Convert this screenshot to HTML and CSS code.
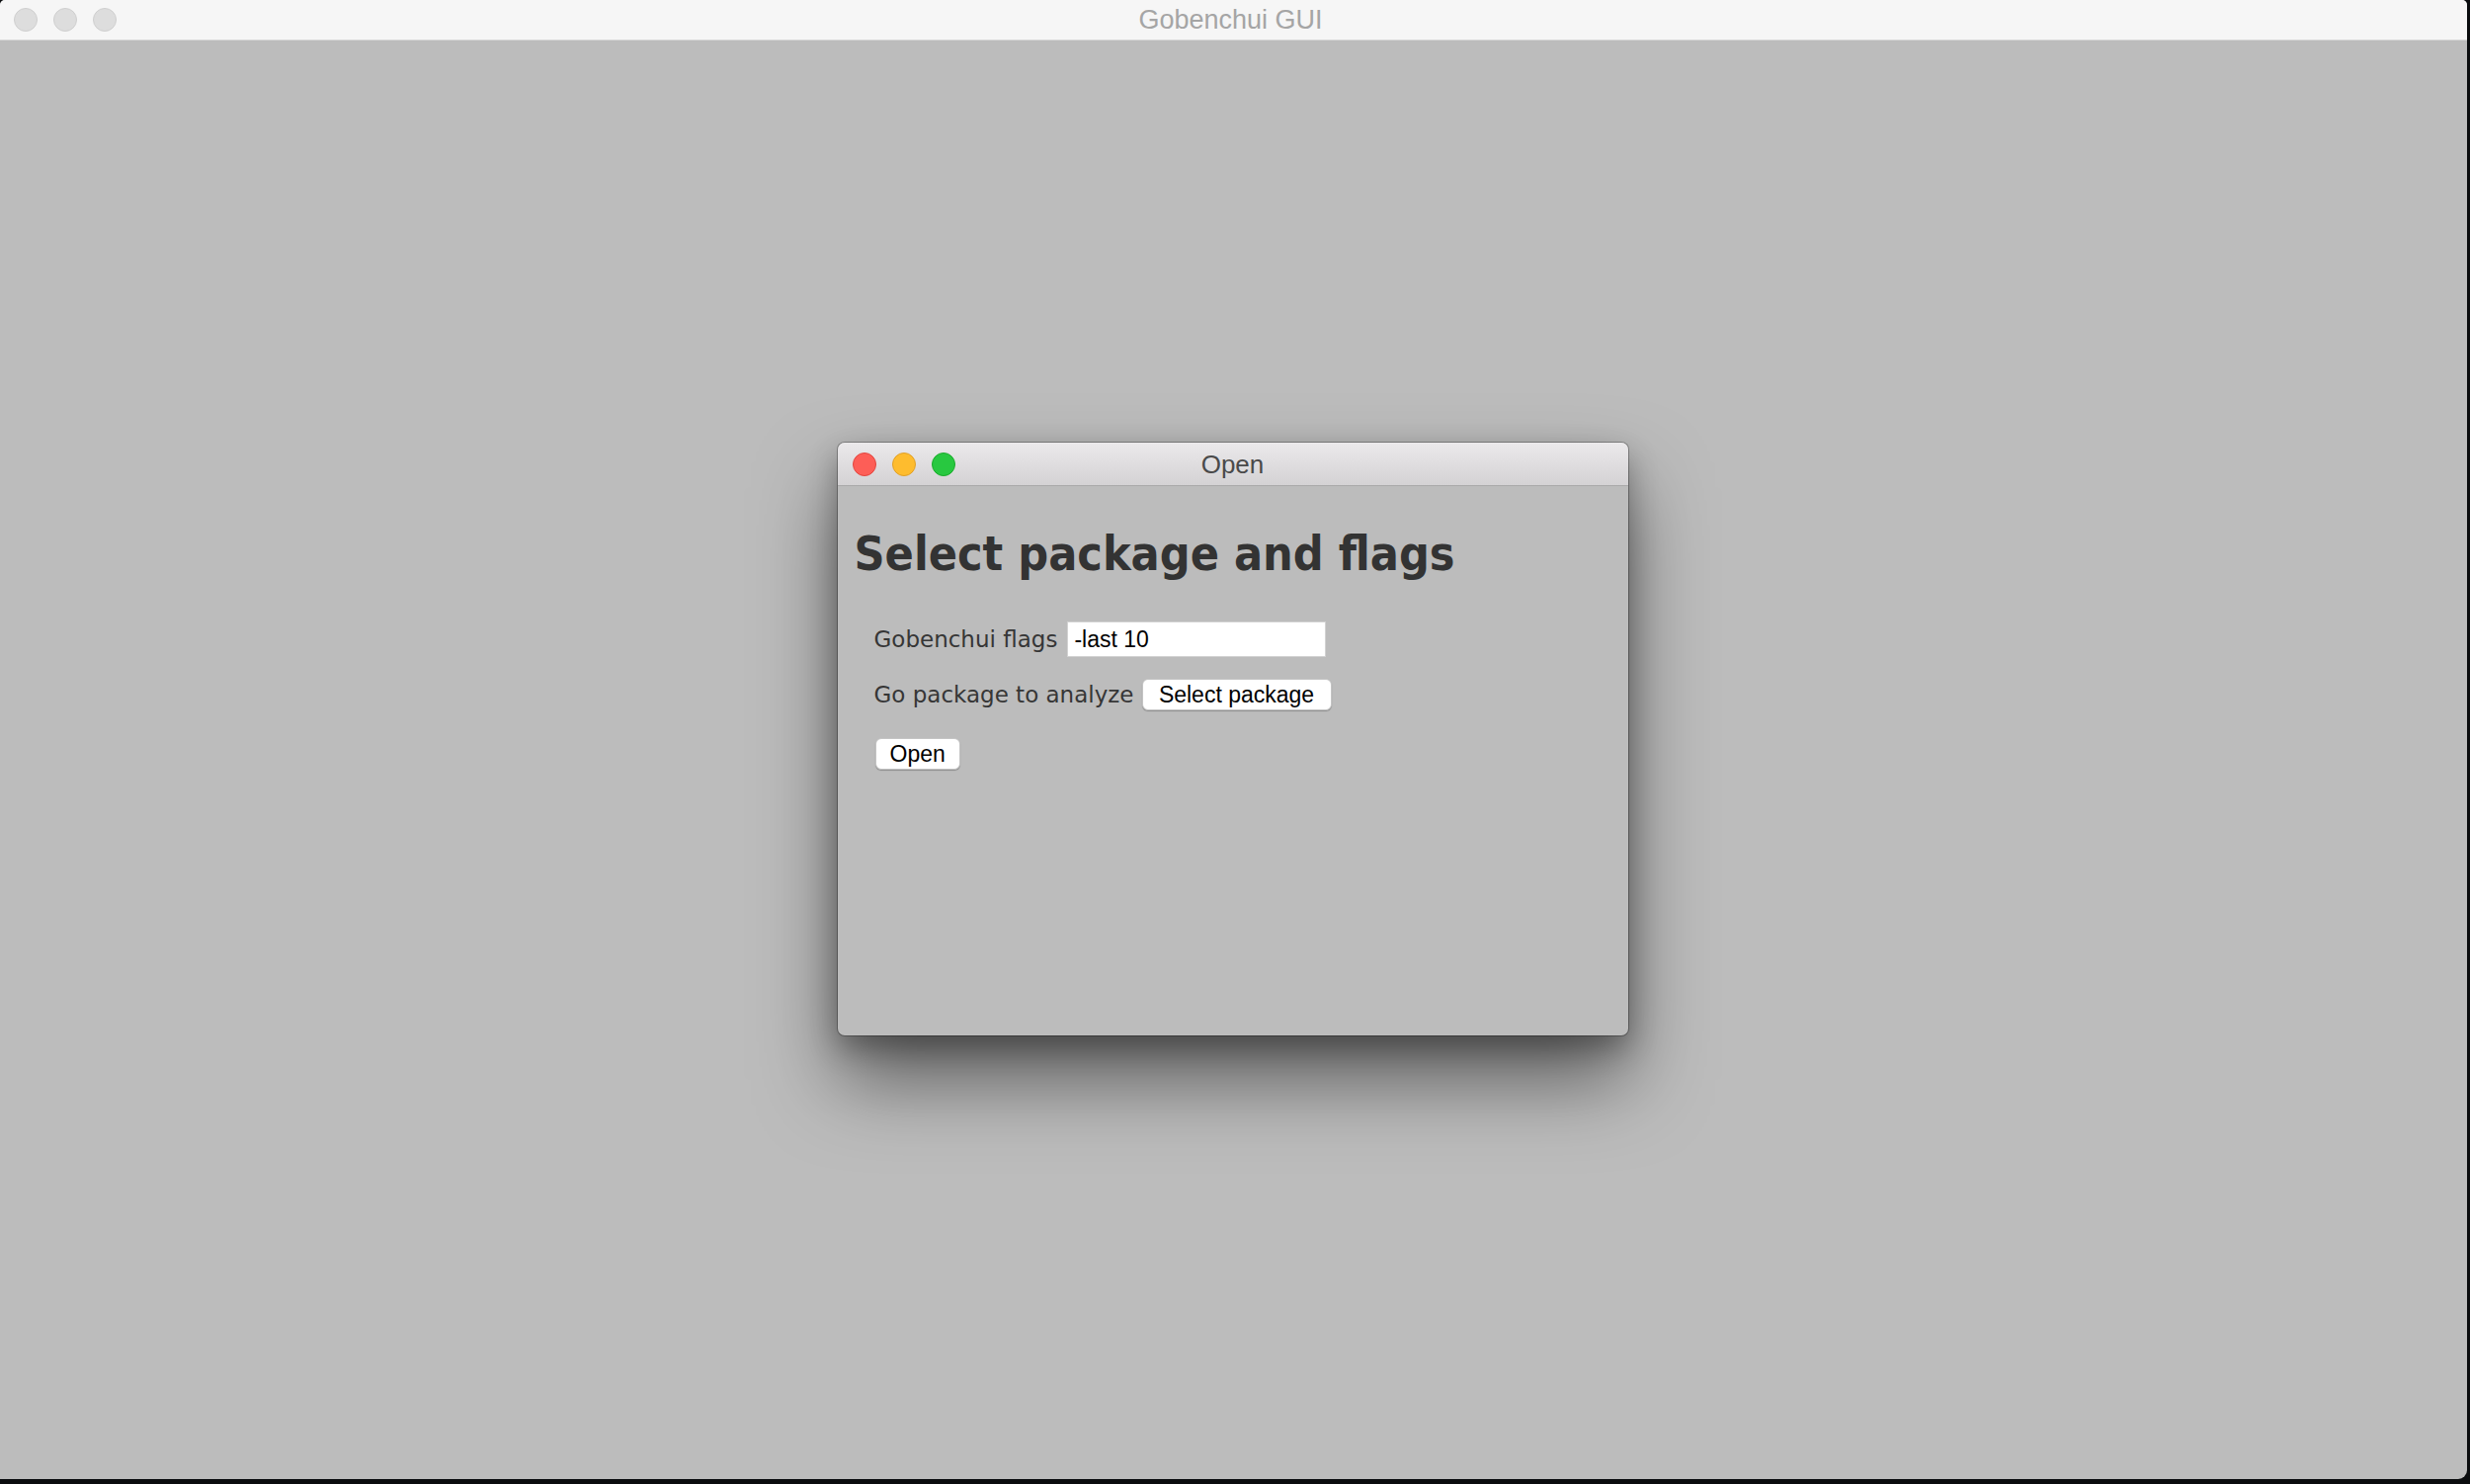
FILE: index.html
```html
<!DOCTYPE html>
<html lang="en">
<head>
<meta charset="utf-8">
<title>Gobenchui GUI</title>
<link rel="stylesheet" href="styles.css">
</head>
<body>
<div class="window">
  <div class="titlebar">
    <div class="lights">
      <span class="light inactive"></span>
      <span class="light inactive"></span>
      <span class="light inactive"></span>
    </div>
    <div class="title">Gobenchui GUI</div>
  </div>
  <div class="content">
    <div class="dialog">
      <div class="dlg-titlebar">
        <div class="lights dlg-lights">
          <span class="light red"></span>
          <span class="light yellow"></span>
          <span class="light green"></span>
        </div>
        <div class="dlg-title">Open</div>
      </div>
      <div class="dlg-body">
        <h1 class="heading">Select package and flags</h1>
        <div class="form">
          <div class="row row-flags">
            <span class="label">Gobenchui flags</span>
            <input class="field" type="text" value="-last 10">
          </div>
          <div class="row row-pkg">
            <span class="label">Go package to analyze</span>
            <button class="btn btn-select">Select package</button>
          </div>
          <div class="row row-open">
            <button class="btn btn-open">Open</button>
          </div>
        </div>
      </div>
    </div>
  </div>
</div>
</body>
</html>
```

FILE: styles.css
```css
* { box-sizing: border-box; }
html, body {
  margin: 0;
  padding: 0;
  background: #0a0c0e;
  width: 2500px;
  height: 1502px;
  overflow: hidden;
}
.window {
  width: 2497px;
  height: 1497px;
  background: #bcbcbc;
  border-radius: 5px 5px 9px 0;
  display: flex;
  flex-direction: column;
  overflow: hidden;
}
.titlebar {
  height: 41px;
  flex: 0 0 41px;
  background: #f6f6f6;
  border-bottom: 1px solid #d8d8d8;
  position: relative;
  display: flex;
  align-items: center;
  justify-content: center;
}
.lights {
  position: absolute;
  left: 14px;
  top: 8px;
  display: flex;
  gap: 16px;
}
.light {
  width: 24px;
  height: 24px;
  border-radius: 50%;
  display: block;
}
.light.inactive {
  background: #dddddd;
  border: 1px solid #cfcfcf;
}
.title {
  font-family: "Liberation Sans", Arial, sans-serif;
  font-size: 27px;
  color: #a5a5a5;
  margin-left: -6px;
}
.content {
  flex: 1;
  display: flex;
  justify-content: center;
  padding-top: 407px;
}
.dialog {
  width: 800px;
  height: 600px;
  margin-left: -2px;
  background: #bcbcbc;
  border-radius: 7px;
  box-shadow: 0 0 0 1px rgba(0,0,0,0.28), 0 45px 80px rgba(0,0,0,0.5), 0 12px 30px rgba(0,0,0,0.3);
  display: flex;
  flex-direction: column;
  overflow: hidden;
}
.dlg-titlebar {
  height: 44px;
  flex: 0 0 44px;
  background: linear-gradient(#ebe9eb, #d4d2d4);
  border-bottom: 1px solid #a9a9a9;
  position: relative;
  display: flex;
  align-items: center;
  justify-content: center;
}
.dlg-lights {
  left: 15px;
  top: 10px;
}
.light.red { background: #fd5e57; border: 1px solid #e2463f; }
.light.yellow { background: #febc2e; border: 1px solid #e0a028; }
.light.green { background: #28c840; border: 1px solid #1aab2b; }
.dlg-title {
  font-family: "Liberation Sans", Arial, sans-serif;
  font-size: 26px;
  color: #4a4a4a;
  margin-top: 1px;
}
.dlg-body {
  padding: 40px 17px 0 17px;
}
.heading {
  margin: 0;
  font-family: "DejaVu Sans Condensed", "DejaVu Sans", sans-serif;
  font-stretch: condensed;
  font-weight: bold;
  font-size: 48px;
  line-height: 56px;
  color: #333333;
}
.form {
  padding: 41px 0 0 20px;
  display: flex;
  flex-direction: column;
}
.row {
  display: flex;
  align-items: center;
  gap: 8px;
}
.row-flags { gap: 10px; }
.row-pkg { margin-top: 22px; gap: 8px; }
.row-open { margin-top: 28px; }
.label {
  font-family: "DejaVu Sans", sans-serif;
  font-size: 23px;
  color: #363636;
}
.field {
  width: 262px;
  height: 36px;
  margin: 0;
  border: 1px solid #d2d2d2;
  box-shadow: inset 0 0 0 1px #ffffff;
  background: #ffffff;
  padding: 0 6px;
  font-family: "Liberation Sans", Arial, sans-serif;
  font-size: 23px;
  color: #000000;
  outline: none;
}
.btn {
  margin: 0;
  height: 32px;
  background: #ffffff;
  border: 1px solid #c4c4c4;
  border-radius: 6px;
  box-shadow: 0 1px 1px rgba(0,0,0,0.25);
  font-family: "Liberation Sans", Arial, sans-serif;
  font-size: 23px;
  color: #000000;
  padding: 0 14px;
  line-height: 30px;
}
.btn-select { width: 192px; }
.btn-open { width: 86px; margin-left: 1px; }
```
